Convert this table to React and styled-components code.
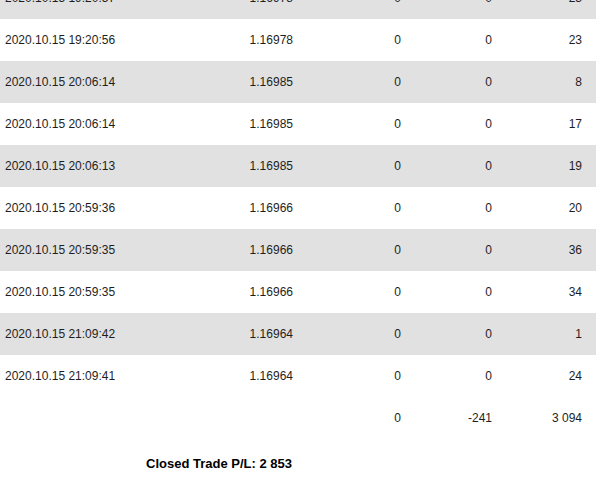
import React from "react";
import styled, { createGlobalStyle } from "styled-components";

const trades = [
  { time: "2020.10.15 19:20:57", price: "1.16978", commission: "0", swap: "0", profit: "23" },
  { time: "2020.10.15 19:20:56", price: "1.16978", commission: "0", swap: "0", profit: "23" },
  { time: "2020.10.15 20:06:14", price: "1.16985", commission: "0", swap: "0", profit: "8" },
  { time: "2020.10.15 20:06:14", price: "1.16985", commission: "0", swap: "0", profit: "17" },
  { time: "2020.10.15 20:06:13", price: "1.16985", commission: "0", swap: "0", profit: "19" },
  { time: "2020.10.15 20:59:36", price: "1.16966", commission: "0", swap: "0", profit: "20" },
  { time: "2020.10.15 20:59:35", price: "1.16966", commission: "0", swap: "0", profit: "36" },
  { time: "2020.10.15 20:59:35", price: "1.16966", commission: "0", swap: "0", profit: "34" },
  { time: "2020.10.15 21:09:42", price: "1.16964", commission: "0", swap: "0", profit: "1" },
  { time: "2020.10.15 21:09:41", price: "1.16964", commission: "0", swap: "0", profit: "24" },
];

const GlobalStyle = createGlobalStyle`
  html, body {
    margin: 0;
    padding: 0;
    background: #fff;
    overflow: hidden;
  }
  body {
    font-family: "Liberation Sans", Arial, sans-serif;
  }
`;

const Report = styled.div`
  width: 596px;
  margin-top: -23px;
`;

const Row = styled.div`
  display: grid;
  grid-template-columns: 200px 107px 108px 91px 90px;
  height: 42px;
  align-items: center;
  background: ${(p) => (p.$shaded ? "#e1e1e1" : "transparent")};
  font-size: 12px;
  color: #1e1e1e;
`;

const Cell = styled.div`
  padding: 0 ${(p) => (p.$left ? "5px" : "14px")} 0 5px;
  text-align: ${(p) => (p.$left ? "left" : "right")};
  white-space: nowrap;
`;

const Summary = styled.div`
  display: grid;
  grid-template-columns: 307px 1fr;
  height: 48px;
  align-items: center;
`;

const SummaryText = styled.div`
  padding-right: 15px;
  text-align: right;
  font-size: 13px;
  font-weight: bold;
  color: #000;
`;

const App = () => {
  return (
    <>
      <GlobalStyle />
      <Report>
        {trades.map((t, i) => (
          <Row key={i} $shaded={i % 2 === 0}>
            <Cell $left>{t.time}</Cell>
            <Cell>{t.price}</Cell>
            <Cell>{t.commission}</Cell>
            <Cell>{t.swap}</Cell>
            <Cell>{t.profit}</Cell>
          </Row>
        ))}
        <Row>
          <Cell $left />
          <Cell />
          <Cell>0</Cell>
          <Cell>-241</Cell>
          <Cell>3 094</Cell>
        </Row>
        <Summary>
          <SummaryText>Closed Trade P/L: 2 853</SummaryText>
        </Summary>
      </Report>
    </>
  );
};

export default App;
